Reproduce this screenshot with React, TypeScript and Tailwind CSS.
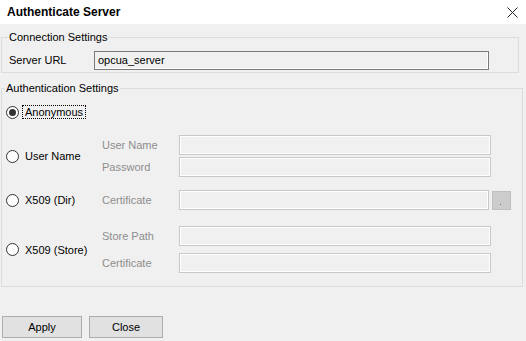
const font = { fontFamily: '"Liberation Sans", Arial, sans-serif' };

function Radio({ checked }: { checked?: boolean }) {
  return (
    <span className="w-[13px] h-[13px] rounded-full border border-[#333333] bg-white flex items-center justify-center shrink-0">
      {checked && <span className="w-[7px] h-[7px] rounded-full bg-[#333333]" />}
    </span>
  );
}

function Option({ label, focused, checked }: { label: string; focused?: boolean; checked?: boolean }) {
  return (
    <div className="w-[100px] shrink-0 flex items-center pl-[4px] gap-[3px]">
      <Radio checked={checked} />
      <span
        className={`px-[2px] leading-[12px] border ${
          focused ? "border-dotted border-black" : "border-transparent"
        }`}
      >
        {label}
      </span>
    </div>
  );
}

function Field({ label, wide = true }: { label: string; wide?: boolean }) {
  return (
    <div className="flex items-center">
      <span className="w-[77px] shrink-0 text-[#8d8d8d]">{label}</span>
      <div
        className={`h-[20px] border border-[#c8c8c8] bg-[#f0f0f0] shadow-[inset_0_0_0_1px_#ffffff] ${
          wide ? "w-[312px]" : "w-[310px]"
        }`}
      />
    </div>
  );
}

export default function App() {
  return (
    <div className="w-[526px] h-[341px] bg-[#f0f0f0] flex flex-col text-[11px] text-black" style={font}>
      {/* title bar */}
      <div className="h-[24px] bg-white flex items-center justify-between pl-[7px] pr-[8px]">
        <span className="text-[12px] font-bold">Authenticate Server</span>
        <svg width="11" height="11" viewBox="0 0 11 11">
          <path d="M0.5 0.5L10.5 10.5M10.5 0.5L0.5 10.5" stroke="#222" strokeWidth="1" />
        </svg>
      </div>

      <fieldset className="mt-[6px] ml-[1px] w-[518px] border border-[#dcdcdc]">
        <legend className="ml-[6px] px-[1px] leading-[14px]">Connection Settings</legend>
        <div className="flex items-center pt-[7px] pb-[2px]">
          <span className="w-[92px] pl-[7px] shrink-0">Server URL</span>
          <div className="w-[395px] h-[19px] border border-[#7a7a7a] bg-[#f0f0f0] shadow-[inset_-1px_-1px_0_#ffffff] flex items-center pl-[3px]">
            opcua_server
          </div>
        </div>
      </fieldset>

      <fieldset className="mt-[8px] ml-[1px] w-[522px] border border-[#dcdcdc]">
        <legend className="ml-[3px] px-[1px] leading-[14px]">Authentication Settings</legend>
        <div className="flex flex-col pt-[10px] pb-[13px]">
          <div className="h-[14px] flex items-center">
            <Option label="Anonymous" focused checked />
          </div>

          <div className="mt-[16px] flex items-center">
            <Option label="User Name" />
            <div className="flex flex-col gap-[2px]">
              <Field label="User Name" />
              <Field label="Password" />
            </div>
          </div>

          <div className="mt-[13px] flex items-center">
            <Option label="X509 (Dir)" />
            <Field label="Certificate" wide={false} />
            <div className="ml-[3px] w-[19px] h-[19px] bg-[#cccccc] border border-[#bfbfbf] flex items-end justify-center pb-[4px]">
              <span className="w-[1px] h-[1px] bg-[#777777] -ml-[3px]" />
            </div>
          </div>

          <div className="mt-[16px] flex items-center">
            <Option label="X509 (Store)" />
            <div className="flex flex-col gap-[7px]">
              <Field label="Store Path" />
              <Field label="Certificate" />
            </div>
          </div>
        </div>
      </fieldset>

      <div className="mt-[29px] flex">
        <button className="ml-[2px] w-[80px] h-[22px] bg-[#e1e1e1] border border-[#adadad]">Apply</button>
        <button className="ml-[7px] w-[74px] h-[22px] bg-[#e1e1e1] border border-[#adadad]">Close</button>
      </div>
    </div>
  );
}
